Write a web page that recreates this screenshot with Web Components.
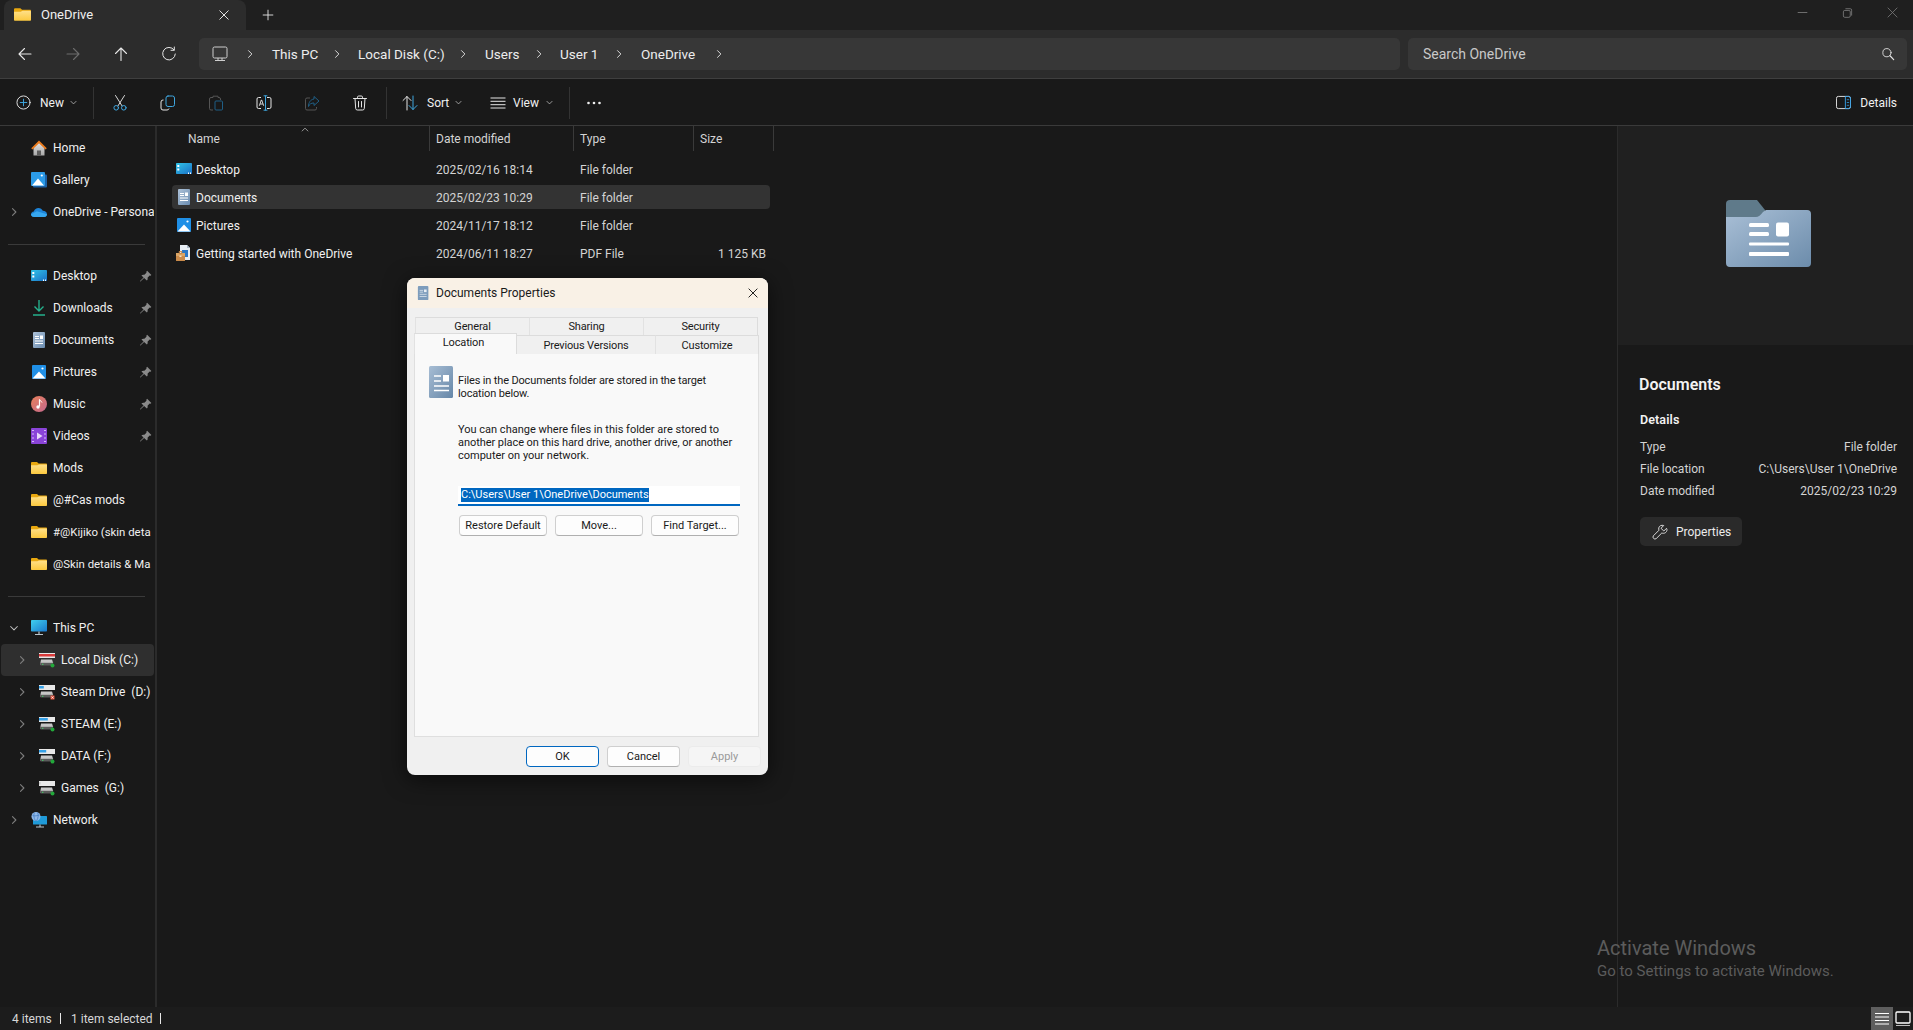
<!DOCTYPE html>
<html lang="en"><head><meta charset="utf-8"><title>OneDrive</title>
<style>
html,body{margin:0;height:100%;background:#191919;overflow:hidden}
body{font-family:Roboto,"Noto Sans","Liberation Sans",sans-serif;color:#fff;font-size:12px}
#app{display:flex;flex-direction:column;height:100vh;position:relative}
</style></head><body>
<div id="app">
<x-tabbar></x-tabbar>
<x-navbar></x-navbar>
<x-cmdbar></x-cmdbar>
<x-main>
<x-sidebar slot="side"></x-sidebar>
<x-filelist slot="list"></x-filelist>
<x-details slot="details"></x-details>
</x-main>
<x-statusbar></x-statusbar>
<x-watermark></x-watermark>
<x-dialog></x-dialog>
</div>
<script>
const S=(n,body,extra='')=>`<svg class="ic" width="${n}" height="${n}" viewBox="0 0 16 16" fill="none" ${extra}>${body}</svg>`;
const L='stroke="#e6e6e6" stroke-width="1" stroke-linecap="round" stroke-linejoin="round"';
const B='stroke="#3fa7e0" stroke-width="1" stroke-linecap="round" stroke-linejoin="round"';
const ICON={
 folder:n=>S(n,`<defs><linearGradient id="fy" x1="0" y1="0" x2="0" y2="1"><stop offset="0" stop-color="#ffe08a"/><stop offset="1" stop-color="#fcc93f"/></linearGradient></defs><path d="M0 3.2C0 2.5.5 2 1.2 2H6l1.6 1.5H15c.6 0 1 .4 1 1V6H0z" fill="#e9a80f"/><path d="M0 5.3h6.3L8 4.4h7c.6 0 1 .4 1 1v7.500c0 .6-.4 1-1 1H1c-.6 0-1-.4-1-1z" fill="url(#fy)"/>`),
 home:n=>S(n,`<defs><linearGradient id="hm" x1="0" y1="0" x2="0" y2="1"><stop offset="0" stop-color="#e2e2e2"/><stop offset="1" stop-color="#a8a8a8"/></linearGradient></defs><path d="M2.500 7.500V15.500h11V7.500L8 2.500z" fill="url(#hm)"/><path d="M6 15.500V10.500h4v5z" fill="#5d5d5d"/><path d="M.2 8.300 8 .6l7.800 7.700-1.300 1.300L8 3.300 1.500 9.600z" fill="#ea7a1c"/>`),
 gallery:n=>S(n,`<rect x="2" y="2.500" width="14" height="13" rx="1" fill="#1b62a8"/><rect x="0" y="0" width="14" height="14" rx="1" fill="#2b9be8"/><path d="M1 13.500 7 6.500l6 7z" fill="#fff"/><circle cx="10.800" cy="3.500" r="1.100" fill="#fff"/>`),
 cloud:n=>S(n,`<path d="M3.300 13C1.400 13 0 11.800 0 10.200c0-1.500 1.200-2.700 2.800-2.800C3.500 5.400 5.300 4 7.500 4c1.900 0 3.600 1.100 4.300 2.800C14.200 6.900 16 8.300 16 10.200 16 11.800 14.700 13 13 13z" fill="#1d84d8"/><path d="M3.300 13C1.400 13 0 11.800 0 10.200l6-3 10 3c0 1.600-1.300 2.800-3 2.800z" fill="#37a8f0"/>`),
 desktop:n=>S(n,`<defs><linearGradient id="dk" x1="0" y1="0" x2="1" y2="1"><stop offset="0" stop-color="#31c4e8"/><stop offset="1" stop-color="#1a70c6"/></linearGradient></defs><rect y="2" width="16" height="11" rx=".8" fill="url(#dk)"/><rect x="1.300" y="4" width="2" height="2" fill="#fff"/><rect x="1.300" y="7.500" width="2" height="2" fill="#fff"/><rect x="12" y="11.500" width="1" height="1.500" fill="#fff"/><rect x="14" y="11.500" width="1" height="1.500" fill="#fff"/>`),
 downloads:n=>S(n,`<path d="M8 0v11M3.500 6.500 8 11l4.500-4.500" stroke="#25b08c" stroke-width="1.400"/><path d="M2 15h12" stroke="#25b08c" stroke-width="1.500"/>`),
 documents:n=>S(n,`<defs><linearGradient id="dc" x1="0" y1="0" x2="1" y2="1"><stop offset="0" stop-color="#aec2d8"/><stop offset="1" stop-color="#6a8cb0"/></linearGradient></defs><rect x="2" y="0" width="12" height="16" rx="1" fill="url(#dc)"/><path d="M4 4.500h4M4 6.500h4M4 9h8M4 11.500h8" stroke="#fff"/><rect x="9" y="3.500" width="3" height="3.500" fill="#fff"/>`),
 pictures:n=>S(n,`<rect x="1" y="1" width="14" height="14" rx="1" fill="#1f8fe6"/><path d="M1.500 14.500 8 7.500l6.500 7z" fill="#fff"/><circle cx="11.500" cy="4.500" r="1.100" fill="#fff"/>`),
 music:n=>S(n,`<defs><linearGradient id="mu" x1="0" y1="0" x2="1" y2="1"><stop offset="0" stop-color="#e8805a"/><stop offset="1" stop-color="#c4688e"/></linearGradient></defs><circle cx="8" cy="8" r="8" fill="url(#mu)"/><path d="M8.500 3.500v7" stroke="#fff" stroke-width="1.200"/><path d="M8.500 3.500c.5 1.600 2.300 1.700 2.500 3" stroke="#fff"/><circle cx="7" cy="11" r="1.700" fill="#fff"/>`),
 videos:n=>S(n,`<rect width="16" height="16" rx="1" fill="#8a44d8"/><path d="M6 4.500v7l5.500-3.500z" fill="#e8d8fa"/><path d="M1 2.500h2M1 6h2M1 10h2M1 13.500h2M13 2.500h2M13 6h2M13 10h2M13 13.500h2" stroke="#d6b8f8"/>`),
 pc:n=>S(n,`<defs><linearGradient id="pc" x1="0" y1="0" x2="1" y2="1"><stop offset="0" stop-color="#40d0ee"/><stop offset="1" stop-color="#1a78cc"/></linearGradient></defs><rect y="0" width="16" height="11.500" rx=".8" fill="url(#pc)"/><path d="M8 11.500v2.500M4 14.500h8" stroke="#b8c4cc" stroke-width="1.200"/>`),
 drive:(n,bar='#35a0e6',dot='#22a83a',w=.55)=>S(n,`<rect x="0" y="1" width="16" height="5" fill="#e8e8e8"/><rect x="0" y="2" width="${16*w}" height="2.500" fill="${bar}"/><path d="M2 7.500h11l1 3v2.500H1.500v-2.500z" fill="#c6c6c6"/><rect x="1.500" y="10.800" width="12.500" height="2.700" fill="#5b5b5b"/><rect x="3" y="11.800" width="1.400" height=".9" fill="#43e06a"/>${dot=='x'?`<rect x="11.500" y="11.500" width="4" height="4" fill="#e0553f"/><path d="M12.500 12.500l2 2m0-2l-2 2" stroke="#fff" stroke-width=".7"/>`:`<circle cx="13.500" cy="13.500" r="2" fill="${dot}"/>`}`),
 network:n=>S(n,`<rect x="2" y="4" width="14" height="8.500" rx=".6" fill="#1f9ad8"/><path d="M9 12.500v2M5 15h8" stroke="#b8c4cc" stroke-width="1.100"/><circle cx="5" cy="4.500" r="4.500" fill="#8fb8e8"/><path d="M1.500 3.500c2 1 5 0 7-.5M3.500 .5c-1 2-1 5 1 8.500M6.500 .5c1 2 1 5-1 8.500" stroke="#3f78c0" stroke-width=".7"/>`),
 pin:n=>S(n,`<path d="M10 .8 15.200 6l-1 1-1.100-.2-2.600 2.600c.4 1.500.1 2.700-.8 3.600L6.300 9.700 1.700 14.300 1 13.700l4.600-4.600L3 6.700c.9-.9 2.100-1.200 3.600-.8l2.600-2.600L9 2z" fill="#8a8a8a"/>`),
 chevR:(n,c='#7c7c7c',w=1.5)=>S(n,`<path d="M6 3.500 10.500 8 6 12.500" stroke="${c}" stroke-width="${w}" stroke-linecap="round" stroke-linejoin="round"/>`),
 chevD:(n,c='#bdbdbd')=>S(n,`<path d="M3.500 6 8 10.500 12.500 6" stroke="${c}" stroke-width="1.400" stroke-linecap="round" stroke-linejoin="round"/>`),
 pdf:n=>S(n,`<path d="M4 0h7l3 3v12H4z" fill="#e8eef4"/><path d="M11 0v3h3" fill="#a8b8c8"/><rect x="6" y="5" width="6" height="7" fill="#2a78c8"/><rect x="0" y="8" width="9" height="8" rx=".6" fill="#c98a4a"/><rect x="0" y="8" width="9" height="3" fill="#dba565"/><rect x="3.300" y="6.600" width="2.400" height="2" fill="none" stroke="#c98a4a"/><rect x="3.500" y="10.500" width="2" height="1.500" fill="#f4e4c8"/>`),
 back:(n,c='#e8e8e8')=>S(n,`<path d="M14 8H2M7.500 2.500 2 8l5.500 5.500" stroke="${c}" stroke-width="1.100" stroke-linecap="round" stroke-linejoin="round"/>`),
 fwd:(n,c='#6c6c6c')=>S(n,`<path d="M2 8h12M8.500 2.500 14 8l-5.500 5.500" stroke="${c}" stroke-width="1.100" stroke-linecap="round" stroke-linejoin="round"/>`),
 up:(n,c='#e8e8e8')=>S(n,`<path d="M8 14.500V2M2.500 7.500 8 2l5.500 5.500" stroke="${c}" stroke-width="1.100" stroke-linecap="round" stroke-linejoin="round"/>`),
 refresh:n=>S(n,`<path d="M13 3.800A6.300 6.300 0 1 0 14.300 8" ${L}/><path d="M13.300 1v3.300H10" ${L}/>`),
 monitor:n=>S(n,`<rect x="1" y="1" width="14" height="11" rx="1.500" stroke="#cfcfcf" stroke-width="1"/><path d="M3 14.500h10M6 12v2.500M10 12v2.500" stroke="#cfcfcf"/>`),
 search:n=>S(n,`<circle cx="6.800" cy="6.500" r="4.700" ${L}/><path d="M10.300 10 14.500 14.500" stroke="#e6e6e6" stroke-width="1.300" stroke-linecap="round"/>`),
 plus:n=>S(n,`<circle cx="8" cy="8" r="7" ${L}/><path d="M8 4.500v7M4.500 8h7" stroke="#3fa7e0" stroke-linecap="round"/>`),
 cut:n=>S(n,`<path d="M3.500 .5 10 10.800M12.500 .5 6 10.800" stroke="#d8d8d8" stroke-linecap="round"/><circle cx="4.200" cy="12.800" r="2.300" ${B}/><circle cx="11.800" cy="12.800" r="2.300" ${B}/>`),
 copy:n=>S(n,`<path d="M3.500 5H3a2 2 0 0 0-2 2v6a2 2 0 0 0 2 2h4a2 2 0 0 0 2-1.500" stroke="#e6e6e6"/><rect x="6" y="1" width="8.500" height="10.500" rx="2" ${B}/>`),
 paste:n=>S(n,`<path d="M5 2.500H3a1.500 1.500 0 0 0-1.500 1.500v9.500A1.500 1.500 0 0 0 3 15h2M10 2.500h1A1.500 1.500 0 0 1 12.500 4v1M5 2.500V1.200h5v1.300" stroke="#555"/><rect x="7" y="6" width="7.500" height="9" rx="1" stroke="#1f5f86"/>`),
 rename:n=>S(n,`<path d="M5 2.500H2.500a1.500 1.500 0 0 0-1.500 1.500v8a1.500 1.500 0 0 0 1.500 1.500H5M11 2.500h2.500A1.500 1.500 0 0 1 15 4v8a1.500 1.500 0 0 1-1.500 1.500H11" stroke="#e6e6e6"/><path d="M9.500 1v14M8 .8h3M8 15.200h3" ${B}/><path d="M3.300 10.800 5.300 5h.4l2 5.800M4.100 9h2.800" stroke="#e6e6e6" stroke-width=".9"/>`),
 share:n=>S(n,`<path d="M6 3H3a1.500 1.500 0 0 0-1.500 1.500v9A1.500 1.500 0 0 0 3 15h8a1.500 1.500 0 0 0 1.500-1.500V12" stroke="#555"/><path d="M10 1.500 15 6l-5 4.500V8c-3 0-4.500 1-5.500 3.500C4.500 7.500 6.500 4.500 10 4z" stroke="#1f5f86"/>`),
 trash:n=>S(n,`<path d="M1.500 3.500h13M5.500 3.500V2.200A1.200 1.200 0 0 1 6.700 1h2.600a1.200 1.200 0 0 1 1.200 1.200v1.300M3 3.500l.7 10a1.700 1.700 0 0 0 1.700 1.500h5.200a1.700 1.700 0 0 0 1.700-1.500l.7-10M6.500 6.500v5.500M9.500 6.500v5.500" ${L}/>`),
 sort:n=>S(n,`<path d="M5 15V1.500M1 5.500l4-4 4 4" stroke="#e6e6e6" stroke-linecap="round" stroke-linejoin="round"/><path d="M11 1v13.500M7 10.500l4 4 4-4" ${B}/>`),
 view:n=>S(n,`<path d="M.5 3h15M.5 6.300h15M.5 9.700h15M.5 13h15" stroke="#e6e6e6"/>`),
 details:n=>S(n,`<rect x=".5" y="1.500" width="15" height="13" rx="2" stroke="#e6e6e6"/><path d="M10 1.500h3.500a2 2 0 0 1 2 2v9a2 2 0 0 1-2 2H10z" stroke="#35a0e6"/><path d="M11.500 5h2.500M11.500 8h2.500M11.500 11h2.500" stroke="#35a0e6" stroke-width=".8"/>`),
 wrench:n=>S(n,`<path d="M14.500 4.300 11.800 7 9 4.300l2.700-2.800C9.500.8 7.300 1.800 6.800 3.800c-.2.800-.1 1.700.2 2.400L1.400 11.800a2 2 0 0 0 2.800 2.800L9.800 9c2.500 1 5.100-.6 5.200-3.200 0-.5-.2-1-.5-1.500z" stroke="#d8d8d8" stroke-linejoin="round"/>`),
 bigfolder:()=>`<svg width="85" height="67" viewBox="0 0 85 67" fill="none"><defs><linearGradient id="bf" x1="0" y1="0" x2="1" y2="1"><stop offset="0" stop-color="#a9bfd6"/><stop offset="1" stop-color="#6c8cab"/></linearGradient></defs><path d="M0 4a4 4 0 0 1 4-4h27l8 10v12H0z" fill="#5f7a8a"/><path d="M0 17h30c2 0 5-2 7-5l3-2h41a4 4 0 0 1 4 4v49a4 4 0 0 1-4 4H4a4 4 0 0 1-4-4z" fill="url(#bf)"/><rect x="23" y="23" width="20" height="4" rx="1.500" fill="#fff"/><rect x="23" y="32" width="20" height="4" rx="1.500" fill="#fff"/><rect x="50" y="22.500" width="13" height="14" rx="2" fill="#fff"/><rect x="23" y="42.500" width="40" height="3" rx="1" fill="#fff"/><rect x="23" y="52" width="40" height="4" rx="1" fill="#fff"/></svg>`,
 dlgdoc:()=>`<svg width="24" height="32" viewBox="0 0 24 32"><defs><linearGradient id="dd" x1="0" y1="0" x2="1" y2="1"><stop offset="0" stop-color="#a7bdd4"/><stop offset="1" stop-color="#6687a8"/></linearGradient></defs><rect width="24" height="32" rx="1.500" fill="url(#dd)"/><path d="M5 10h7M5 15h7M5 20h15M5 24.500h15" stroke="#fff" stroke-width="1.500"/><rect x="14" y="9" width="6" height="6.500" fill="#fff"/></svg>`
};
function def(name,css,html,setup){
 customElements.define(name,class extends HTMLElement{
  connectedCallback(){
   if(this.shadowRoot)return;
   const r=this.attachShadow({mode:'open'});
   r.innerHTML=`<style>:host{box-sizing:border-box}*{box-sizing:border-box}.ic{display:block;flex:none}${css}</style>`+(typeof html=='function'?html(this):html);
   if(setup)setup(r,this);
  }
 });
}
def('x-tabbar',`:host{display:flex;height:30px;background:#1f1f1f;flex:none;align-items:stretch}
.tab{margin-left:4px;width:242px;background:#2c2c2c;border-radius:8px 8px 0 0;display:flex;align-items:center;padding:0 16px 1px 10px;gap:10px;font-size:13px;color:#f0f0f0}
.t{flex:1}
.plus{margin-left:16px;align-self:center}
.sp{flex:1}.w{display:flex;align-items:center;gap:34px;padding:0 15px 6px 0}`,
`<div class="tab">${ICON.folder(17)}<span class="t">OneDrive</span>${S(12,'<path d="M2 2l12 12M14 2 2 14" stroke="#e6e6e6" stroke-width="1.300"/>')}</div>
<div class="plus">${S(12,'<path d="M8 1v14M1 8h14" stroke="#e6e6e6" stroke-width="1.200"/>')}</div><div class="sp"></div>
<div class="w">${S(11,'<path d="M1 8h14" stroke="#777" stroke-width="1.300"/>')}${S(11,'<rect x="2" y="5" width="10" height="10" rx="2" stroke="#777" stroke-width="1.300"/><path d="M5 2.500h7a2 2 0 0 1 2 2v8" stroke="#777" stroke-width="1.300"/>')}${S(11,'<path d="M1 1l14 14M15 1 1 15" stroke="#777" stroke-width="1.200"/>')}</div>`);
def('x-navbar',`:host{display:flex;height:49px;background:#2c2c2c;flex:none;align-items:center;border-bottom:1px solid #3f3f3f;padding:0 6px 1px 0}
.nav{display:flex;width:199px;padding-left:17px;gap:32px}
.addr{width:1201px;height:32px;background:#373737;border-radius:5px;display:flex;align-items:center;font-size:13.500px;color:#ededed;padding-left:13px}
.addr span{white-space:nowrap}
.search{margin-left:8px;flex:1;height:32px;background:#373737;border-radius:5px;display:flex;align-items:center;justify-content:space-between;padding:0 12px 0 15px;font-size:14px;color:#c8c8c8}`,
`<div class="nav">${ICON.back(16)}${ICON.fwd(16)}${ICON.up(16)}${ICON.refresh(16)}</div>
<div class="addr">${ICON.monitor(16)}
<div style="margin-left:16px">${ICON.chevR(12,'#dcdcdc',1.3)}</div><span style="margin-left:16px;width:59px">This PC</span>
<div>${ICON.chevR(12,'#dcdcdc',1.3)}</div><span style="margin-left:15px;width:99px">Local Disk (C:)</span>
<div>${ICON.chevR(12,'#dcdcdc',1.3)}</div><span style="margin-left:16px;width:48px">Users</span>
<div>${ICON.chevR(12,'#dcdcdc',1.3)}</div><span style="margin-left:15px;width:53px">User 1</span>
<div>${ICON.chevR(12,'#dcdcdc',1.3)}</div><span style="margin-left:16px;width:72px">OneDrive</span>
<div>${ICON.chevR(12,'#dcdcdc',1.3)}</div></div>
<div class="search"><span>Search OneDrive</span>${ICON.search(14)}</div>`);
def('x-cmdbar',`:host{display:flex;height:47px;background:#191919;flex:none;align-items:center;border-bottom:1px solid #3a3a3a;padding:1px 16px 0 16px;font-size:12px;color:#f0f0f0}
.g{display:flex;align-items:center}
.sep{width:1px;height:32px;background:#333}
.lbl{margin-left:9px;white-space:nowrap}
.sp{flex:1}`,
`<div class="g">${ICON.plus(15)}<span class="lbl" style="width:24px">New</span><span style="margin-left:5px">${ICON.chevD(9)}</span></div>
<div class="sep" style="margin-left:15px"></div>
<div class="g" style="margin-left:18px;gap:32px">${ICON.cut(16)}${ICON.copy(16)}${ICON.paste(16)}${ICON.rename(16)}${ICON.share(16)}${ICON.trash(16)}</div>
<div class="sep" style="margin-left:18px"></div>
<div class="g" style="margin-left:15px">${ICON.sort(16)}<span class="lbl" style="width:22px">Sort</span><span style="margin-left:5px">${ICON.chevD(9)}</span></div>
<div class="g" style="margin-left:27px">${ICON.view(16)}<span class="lbl" style="margin-left:7px;width:26px">View</span><span style="margin-left:6px">${ICON.chevD(9)}</span></div>
<div class="sep" style="margin-left:15px"></div>
<div class="g" style="margin-left:16px">${S(16,'<circle cx="2.500" cy="8" r="1.300" fill="#eee"/><circle cx="8" cy="8" r="1.300" fill="#eee"/><circle cx="13.500" cy="8" r="1.300" fill="#eee"/>')}</div>
<div class="sp"></div>
<div class="g">${ICON.details(15)}<span style="margin-left:9px">Details</span></div>`);
def('x-main',`:host{display:flex;flex:1;min-height:0}
.s{display:block;flex:none;width:157px;border-right:2px solid #2b2b2b}
.l{display:block;flex:1}
.d{display:block;flex:none;width:296px}`,
`<div class="s"><slot name="side"></slot></div><div class="l"><slot name="list"></slot></div><div class="d"><slot name="details"></slot></div>`);
def('x-nav-item',`:host{display:flex;height:32px;align-items:center;position:relative;font-size:12px;color:#f0f0f0;white-space:pre;margin-left:1px;width:153px;border-radius:4px;overflow:hidden}
:host([selected]){background:#2f2f2f}
:host([tight]){font-size:11.400px}
.c{width:12px;flex:none}.ico{flex:none;width:16px;margin-left:11px}.t{margin-left:6px;flex:1;overflow:hidden}
.pin{flex:none;width:13px;margin-right:2px}`,
h=>{const lvl=+h.getAttribute('level')||0,c=h.getAttribute('chev'),ic=h.getAttribute('ic');
 const bar=h.getAttribute('bar')||undefined,dot=h.getAttribute('dot')||undefined,w=h.hasAttribute('w')?+h.getAttribute('w'):undefined;
 const svg=ic=='drive'?ICON.drive(16,bar,dot,w):ICON[ic](16);
 return `<div class="c" style="margin-left:${7+lvl*8}px">${c=='r'?ICON.chevR(12):c=='d'?ICON.chevD(12):''}</div><div class="ico">${svg}</div><div class="t"><slot></slot></div>${h.hasAttribute('pin')?`<div class="pin">${ICON.pin(13)}</div>`:''}`;});
def('x-sidebar',`:host{display:block;padding-top:6px;height:100%}
.sep{height:1px;background:#3a3a3a;margin:15.500px 10px 15.500px 8px}`,
`<slot name="a"></slot><div class="sep"></div><slot name="b"></slot><div class="sep"></div><slot name="c"></slot>`,
(r,h)=>{
 const a=[['home','Home'],['gallery','Gallery'],['cloud','OneDrive - Persona','r']];
 const b=[['desktop','Desktop',1],['downloads','Downloads',1],['documents','Documents',1],['pictures','Pictures',1],['music','Music',1],['videos','Videos',1],['folder','Mods'],['folder','@#Cas mods'],['folder','#@Kijiko (skin deta',0,1],['folder','@Skin details & Ma',0,1]];
 const mk=(slot,ic,t,o={})=>{const e=document.createElement('x-nav-item');e.slot=slot;e.setAttribute('ic',ic);for(const k in o)e.setAttribute(k,o[k]);e.textContent=t;h.appendChild(e)};
 a.forEach(x=>mk('a',x[0],x[1],x[2]?{chev:x[2]}:{}));
 b.forEach(x=>mk('b',x[0],x[1],x[2]?{pin:''}:x[3]?{tight:''}:{}));
 mk('c','pc','This PC',{chev:'d'});
 mk('c','drive','Local Disk (C:)',{chev:'r',level:1,selected:'',bar:'#d93a3a',w:'1'});
 mk('c','drive','Steam Drive  (D:)',{chev:'r',level:1,dot:'x',bar:'#35a0e6',w:'.3'});
 mk('c','drive','STEAM (E:)',{chev:'r',level:1,w:'.55'});
 mk('c','drive','DATA (F:)',{chev:'r',level:1,w:'.45'});
 mk('c','drive','Games  (G:)',{chev:'r',level:1,bar:'#c8c8c8',w:'.1'});
 mk('c','network','Network',{chev:'r'});
});
def('x-file-row',`:host{display:block;height:28px;padding:1px 0 3px 15px}
.r{display:grid;grid-template-columns:258px 144px 120px 74px;width:598px;height:24px;align-items:center;font-size:12px;color:#d4d4d4;padding-top:2px;border-radius:4px}
:host([selected]) .r{background:#333}
.r>div{padding-left:6px}
.r>.n{display:flex;align-items:center;gap:4px;color:#f0f0f0;padding-left:4px;margin-top:-2px;white-space:nowrap}
.n span{padding-top:2px}
.r>.z{text-align:right;padding:0 2px 0 0}`,
h=>`<div class="r"><div class="n">${ICON[h.getAttribute('ic')](16)}<span><slot></slot></span></div><div>${h.getAttribute('date')}</div><div>${h.getAttribute('type')}</div><div class="z">${h.getAttribute('size')||''}</div></div>`);
def('x-filelist',`:host{display:block;height:100%;position:relative}
.h{display:grid;grid-template-columns:273px 144px 120px 80px;height:25px;font-size:12px;color:#d4d4d4;width:617px;margin-bottom:5px}
.h div{border-right:1px solid #3a3a3a;padding:6px 0 0 6px}
.h div:first-child{padding-left:31px}
.caret{position:absolute;left:143px;top:-1px}`,
`<div class="h"><div>Name</div><div>Date modified</div><div>Type</div><div>Size</div></div><div class="caret">${S(10,'<path d="M3 10 8 5l5 5" stroke="#a8a8a8" stroke-width="1.400"/>')}</div>
<x-file-row ic="desktop" date="2025/02/16 18:14" type="File folder">Desktop</x-file-row>
<x-file-row ic="documents" date="2025/02/23 10:29" type="File folder" selected>Documents</x-file-row>
<x-file-row ic="pictures" date="2024/11/17 18:12" type="File folder">Pictures</x-file-row>
<x-file-row ic="pdf" date="2024/06/11 18:27" type="PDF File" size="1 125 KB">Getting started with OneDrive</x-file-row>`);
def('x-details',`:host{display:flex;flex-direction:column;height:100%;border-left:1px solid #2b2b2b;font-size:12px;color:#d4d4d4}
.p{height:219px;background:#202020;display:flex;align-items:center;justify-content:center;padding:0 0 4px 5px;flex:none}
.b{padding:29px 16px 0 22px}
h2{margin:0 0 0 -1px;font-size:16px;line-height:22px;font-weight:600;color:#f2f2f2}
h3{margin:15px 0 7px;font-size:12.500px;line-height:18px;font-weight:600;color:#f2f2f2;letter-spacing:.1px}
.kv{display:flex;justify-content:space-between;height:22px;align-items:center;white-space:nowrap}
.btn{margin-top:15px;width:102px;height:29px;background:#2a2a2a;border-radius:5px;display:flex;align-items:center;padding-left:12px;gap:8px;color:#ececec}`,
`<div class="p">${ICON.bigfolder()}</div><div class="b"><h2>Documents</h2><h3>Details</h3>
<div class="kv"><span>Type</span><span>File folder</span></div>
<div class="kv"><span>File location</span><span>C:\\Users\\User 1\\OneDrive</span></div>
<div class="kv"><span>Date modified</span><span>2025/02/23 10:29</span></div>
<div class="btn">${ICON.wrench(16)}<span>Properties</span></div></div>`);
def('x-statusbar',`:host{display:flex;height:23px;background:#1c1c1c;flex:none;align-items:center;font-size:12px;color:#d8d8d8;padding-left:12px}
.bar{width:1px;height:11px;background:#e8e8e8}
span{white-space:nowrap}
.sp{flex:1}
.v{align-self:stretch;display:flex;align-items:center;justify-content:center}
.on{width:22px;background:#5e5e5e}`,
`<span style="width:38px">4 items</span><div class="bar" style="margin-left:10px"></div><span style="margin-left:10px;width:79px">1 item selected</span><div class="bar" style="margin-left:10px"></div><div class="sp"></div>
<div class="v on">${S(16,'<path d="M1 2.500h14M1 6h14M1 9.500h14M1 13h14" stroke="#fff" stroke-width="1.200"/>')}</div>
<div class="v" style="margin:0 2px 0 2px">${S(16,'<rect x="1" y="1" width="14" height="11" rx="1" stroke="#fff" stroke-width="1.300"/><path d="M1 14.500h14" stroke="#bbb"/>')}</div>`);
def('x-watermark',`:host{position:absolute;left:1597px;top:933px;color:#5c5c5c;pointer-events:none;white-space:nowrap}
.a{font-size:20px;line-height:30px}.b{font-size:15px;line-height:16px}`,
`<div class="a">Activate Windows</div><div class="b">Go to Settings to activate Windows.</div>`);
def('x-dlg-btn',`:host{display:flex;align-items:center;justify-content:center;height:21px;background:#fdfdfd;border:1px solid #cfcfcf;border-bottom-color:#b0b0b0;border-radius:4px;font-size:11px;color:#1a1a1a;white-space:nowrap}
:host([def]){border:1.500px solid #0067c0}
:host([dis]){background:#f5f5f5;border-color:#ebebeb;color:#9a9a9a}`,`<slot></slot>`);
def('x-dialog',`:host{position:absolute;left:407px;top:278px;width:361px;height:497px;background:#f0f0f0;border-radius:8px;box-shadow:0 4px 22px rgba(0,0,0,.6);color:#1a1a1a;font-size:11px;display:flex;flex-direction:column;overflow:hidden}
.tb{height:30px;flex:none;background:#f9f1e6;display:flex;align-items:center;padding:0 8px 0 10px;font-size:12px}
.tb .ti{margin-left:5px;flex:1}
.tabs{padding:9px 9px 0 7px;position:relative;flex:none;letter-spacing:-.15px}
.row{display:grid;height:18px;margin-left:1px}
.row div{display:flex;align-items:center;justify-content:center;background:#f0f0f0;border:1px solid #dcdcdc;border-bottom:none;margin-right:-1px;border-left-color:#e2e2e2}
.r1{grid-template-columns:114px 114px 114px}
.r2{grid-template-columns:101px 139px 103px}
.r2 div.act{background:#f9f9f9;height:21px;margin-top:-2px;margin-left:-1px;position:relative;z-index:1;padding:0 4px 3px 0}
.page{margin:0 9px 0 7px;height:384px;background:#f9f9f9;border:1px solid #dfdfdf;padding:12px 0 0 14px;flex:none}
.top{display:flex;gap:5px}
p{margin:0;line-height:13px;white-space:nowrap}
.lines{padding-top:8px;letter-spacing:-.15px}
.para{margin:22px 0 0 29px}
.para span{letter-spacing:-.06px}
.inp{margin:24px 0 0 29px;width:282px;height:20px;background:#fff;border-bottom:2px solid #0067c0;padding:2px 0 0 3px;line-height:13px;white-space:nowrap}
.inp span{background:#0067c0;color:#fff;display:inline-block;height:14px}
.btns{display:grid;grid-template-columns:88px 88px 88px;gap:8px;margin:9px 0 0 30px}
.foot{display:grid;grid-template-columns:73px 73px 73px;gap:8px;justify-content:end;padding:9px 7px 0 0}`,
`<div class="tb">${S(14,'<rect x="1" y="0" width="12" height="16" rx="1" fill="#7d9cbc"/><path d="M3 5h4M3 7h4M3 9.500h8M3 12h8" stroke="#e8eef4" stroke-width=".8"/><rect x="8" y="4" width="3" height="3" fill="#e8eef4"/>')}<span class="ti">Documents Properties</span>${S(14,'<path d="M3 3l10 10M13 3 3 13" stroke="#1a1a1a" stroke-width="1.100"/>')}</div>
<div class="tabs"><div class="row r1"><div>General</div><div>Sharing</div><div>Security</div></div>
<div class="row r2"><div class="act">Location</div><div>Previous Versions</div><div>Customize</div></div></div>
<div class="page"><div class="top"><div style="flex:none">${ICON.dlgdoc()}</div><div class="lines"><p>Files in the Documents folder are stored in the target<br>location below.</p></div></div>
<p class="para">You can change where files in this folder are stored to<br><span>another place on this hard drive, another drive, or another</span><br>computer on your network.</p>
<div class="inp"><span>C:\\Users\\User 1\\OneDrive\\Documents</span></div>
<div class="btns"><x-dlg-btn>Restore Default</x-dlg-btn><x-dlg-btn>Move...</x-dlg-btn><x-dlg-btn>Find Target...</x-dlg-btn></div></div>
<div class="foot"><x-dlg-btn def>OK</x-dlg-btn><x-dlg-btn>Cancel</x-dlg-btn><x-dlg-btn dis>Apply</x-dlg-btn></div>`);
</script>
</body></html>
